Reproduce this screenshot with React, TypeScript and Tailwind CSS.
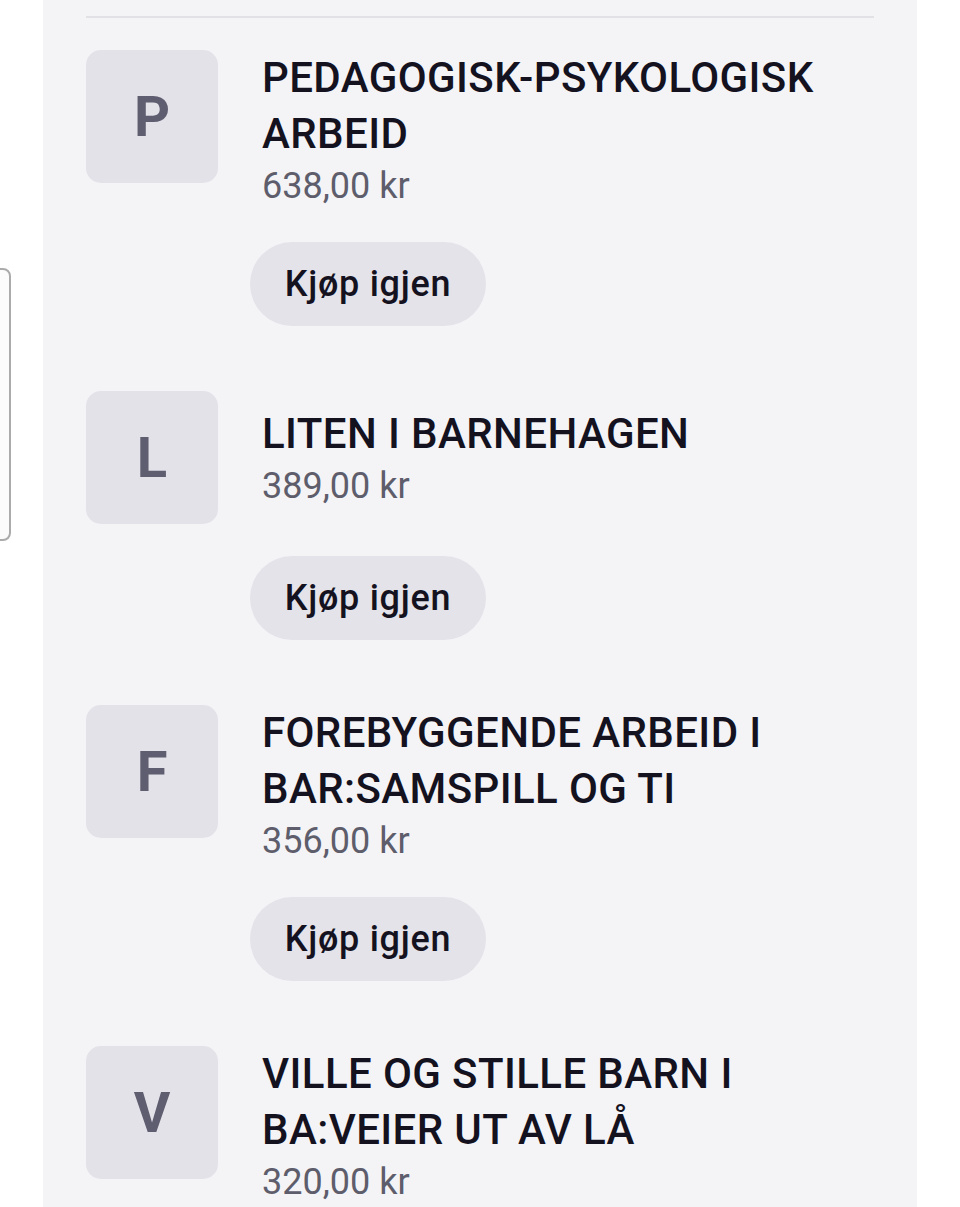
import React from "react";

type Item = { letter: string; lines: string[]; price: string; button?: boolean };

const items: Item[] = [
  { letter: "P", lines: ["PEDAGOGISK-PSYKOLOGISK", "ARBEID"], price: "638,00 kr", button: true },
  { letter: "L", lines: ["LITEN I BARNEHAGEN"], price: "389,00 kr", button: true },
  { letter: "F", lines: ["FOREBYGGENDE ARBEID I", "BAR:SAMSPILL OG TI"], price: "356,00 kr", button: true },
  { letter: "V", lines: ["VILLE OG STILLE BARN I", "BA:VEIER UT AV LÅ"], price: "320,00 kr", button: true },
];

function Row({ item }: { item: Item }) {
  return (
    <div className="flex flex-col">
      <div className="flex items-start">
        <div className="flex h-[133px] w-[132px] shrink-0 items-center justify-center rounded-[15px] bg-[#e3e2e8]">
          <span className="text-[56px] font-bold leading-none text-[#5f5d70]">{item.letter}</span>
        </div>
        <div className="ml-[44px] flex min-h-[133px] flex-col justify-center">
          <div className="text-[42px] font-medium leading-[56px] tracking-[0.4px] text-[#14121f]">
            {item.lines.map((l, i) => (
              <div key={i} className="whitespace-nowrap">
                {l}
              </div>
            ))}
          </div>
          <div className="text-[36px] leading-[48px] text-[#5e5d6b]">{item.price}</div>
        </div>
      </div>
      {item.button && (
        <button className="ml-[164px] mt-[32px] flex h-[84px] w-[236px] items-center justify-center rounded-full bg-[#e4e3e9] text-[36px] font-medium tracking-[0.7px] text-[#14121f]">
          Kjøp igjen
        </button>
      )}
    </div>
  );
}

export default function App() {
  return (
    <div
      className="relative h-[1207px] w-[960px] overflow-hidden bg-white"
      style={{ fontFamily: "Roboto, 'Noto Sans', sans-serif" }}
    >
      <div className="ml-[43px] h-full w-[874px] bg-[#f4f4f7] px-[43px] pt-[16px]">
        <div className="h-[2px] w-full bg-[#e1e1e6]" />
        <div className="mt-[32px] flex flex-col gap-[65px]">
          {items.map((it, i) => (
            <Row key={i} item={it} />
          ))}
        </div>
      </div>
      <div className="absolute left-[-12px] top-[268px] h-[273px] w-[23px] rounded-[8px] border-2 border-[#ababab] bg-[#fbfbfb]" />
    </div>
  );
}
